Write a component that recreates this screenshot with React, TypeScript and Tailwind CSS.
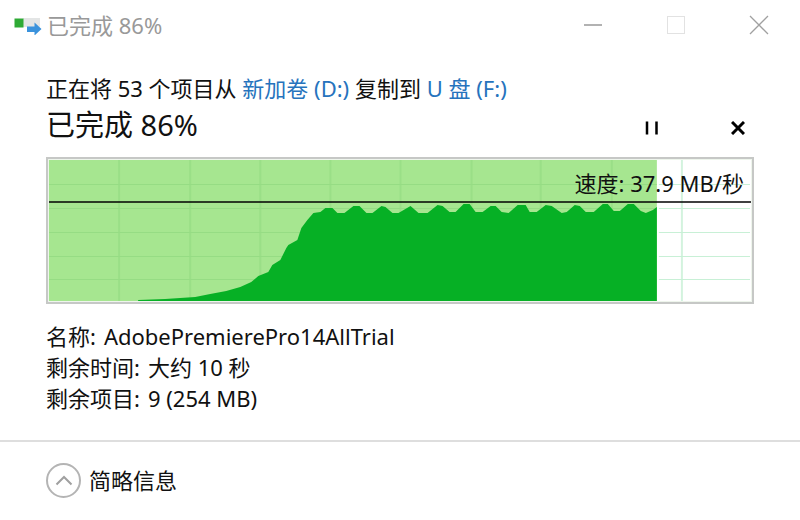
const vertical = [69, 140, 210, 280, 350, 421, 490, 561, 631];
const horizontal = [24, 48, 72, 96, 119];

// transfer speed samples, x / y inside the 701 x 141 graph
const samples = [
  [89, 141], [89, 140], [116, 139], [131, 138], [146, 137], [161, 134], [177, 131], [191, 127],
  [202, 122], [209, 116], [219, 112], [223, 105], [231, 100], [237, 88], [239, 85], [248, 80],
  [252, 68], [258, 60], [264, 53], [271, 52], [276, 48], [283, 48], [288, 53], [295, 53],
  [304, 46], [310, 46], [317, 53], [323, 53], [332, 46], [336, 47], [343, 53], [349, 53],
  [361, 46], [369, 53], [378, 53], [388, 45], [393, 46], [400, 52], [406, 52], [414, 44],
  [420, 44], [426, 52], [433, 52], [441, 46], [446, 46], [452, 52], [459, 53], [468, 45],
  [476, 45], [480, 52], [487, 52], [496, 45], [502, 46], [512, 53], [517, 52], [525, 45],
  [530, 46], [536, 52], [544, 52], [553, 44], [558, 44], [564, 51], [570, 51], [578, 44],
  [584, 44], [591, 51], [596, 53], [603, 50], [607, 47], [607, 141],
];

const details = [
  ["名称:", "AdobePremierePro14AllTrial"],
  ["剩余时间:", "大约 10 秒"],
  ["剩余项目:", "9 (254 MB)"],
];

function CopyIcon() {
  return (
    <svg width="28" height="20" viewBox="0 0 28 20" aria-hidden="true">
      <rect x="9" y="3" width="17" height="9" fill="#e3e5e5" />
      <rect x="0.500" y="3.500" width="9" height="9" fill="#2eaa35" />
      <path d="M13 11.500h7.500V7.500l7 6.500-7 6.500V17H13z" fill="#3a92dc" />
    </svg>
  );
}

function SpeedGraph() {
  return (
    <div className="relative border-2 border-[#c6c8c6] bg-[#eef5ec] p-px">
      <svg className="block h-[141px] w-full" viewBox="0 0 701 141" preserveAspectRatio="none" role="img" aria-label="速度">
        <rect width="701" height="141" fill="#fff" />
        <rect width="607" height="141" fill="#a6e690" />
        {vertical.map((x) => (
          <rect key={x} x={x} width="2" height="141" fill={x < 607 ? "#9adf87" : "#d3f3de"} />
        ))}
        {horizontal.map((y) => (
          <g key={y}>
            <rect y={y} width="607" height="1" fill="#96dc84" />
            <rect x="609" y={y} width="91" height="1" fill="#c8f0d6" />
          </g>
        ))}
        <polygon points={samples.map((p) => p.join(",")).join(" ")} fill="#06b025" />
        <rect y="41" width="701" height="2" fill="#000" fillOpacity="0.75" />
      </svg>
      <p className="absolute top-2 right-2 leading-8">速度: 37.9 MB/秒</p>
    </div>
  );
}

export default function App() {
  return (
    <div className="min-h-screen bg-white font-['Noto_Sans','Noto_Sans_CJK_SC',sans-serif] text-[22px] text-[#111]">
      <header className="flex h-[50px] items-center pl-[14px]">
        <CopyIcon />
        <h1 className="ml-[5px] flex-1 text-[#999]">已完成 86%</h1>
        <button aria-label="最小化" className="grid h-full w-[83px] place-items-center">
          <svg width="20" height="20" viewBox="0 0 20 20">
            <path d="M1 10h18" stroke="#999" strokeWidth="1.500" />
          </svg>
        </button>
        <button aria-label="最大化" disabled className="grid h-full w-[83px] place-items-center">
          <svg width="20" height="20" viewBox="0 0 20 20">
            <rect x="1.500" y="1.500" width="17" height="17" fill="none" stroke="#e2e2e2" />
          </svg>
        </button>
        <button aria-label="关闭" className="grid h-full w-[83px] place-items-center">
          <svg width="20" height="20" viewBox="0 0 20 20">
            <path d="M1 1l18 18M19 1L1 19" stroke="#a0a0a0" strokeWidth="1.300" />
          </svg>
        </button>
      </header>

      <main className="px-[46px] pt-6">
        <p className="leading-7">
          正在将 53 个项目从 <a href="#source" className="text-[#2673bd]">新加卷 (D:)</a> 复制到{" "}
          <a href="#target" className="text-[#2673bd]">U 盘 (F:)</a>
        </p>
        <div className="flex h-[55px] justify-between pt-1">
          <h2 className="text-[29px] leading-[38px]">已完成 86%</h2>
          <div className="flex gap-[62px] pt-[10px] pr-1">
            <button aria-label="暂停" className="grid size-6 place-items-center">
              <svg width="14" height="14" viewBox="0 0 14 14">
                <path d="M2 0.500v13M11.500 0.500v13" stroke="#000" strokeWidth="2.500" />
              </svg>
            </button>
            <button aria-label="取消" className="grid size-6 place-items-center">
              <svg width="14" height="14" viewBox="0 0 14 14">
                <path d="M1 1l12 12M13 1L1 13" stroke="#000" strokeWidth="3" />
              </svg>
            </button>
          </div>
        </div>
        <SpeedGraph />
        <dl className="pt-[17px] leading-[31px]">
          {details.map(([label, value]) => (
            <div key={label} className="flex gap-2">
              <dt>{label}</dt>
              <dd>{value}</dd>
            </div>
          ))}
        </dl>
      </main>

      <footer className="mt-[26px] border-t-2 border-[#dedede] px-[46px] pt-[21px]">
        <button className="flex items-center gap-2">
          <span className="grid size-[35px] place-items-center rounded-full border-2 border-[#b4b4b4]">
            <svg width="18" height="12" viewBox="0 0 18 12" fill="none" aria-hidden="true">
              <path d="M1.500 9.500L9 2l7.500 7.500" stroke="#a0a0a0" strokeWidth="2" />
            </svg>
          </span>
          简略信息
        </button>
      </footer>
    </div>
  );
}
